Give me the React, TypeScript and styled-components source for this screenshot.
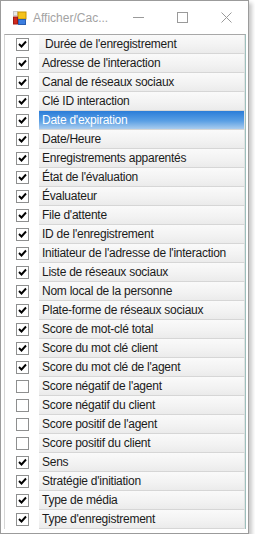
import styled, { createGlobalStyle } from 'styled-components';

const GlobalStyle = createGlobalStyle`
  html, body {
    margin: 0;
    padding: 0;
    background: #ffffff;
  }
  body {
    font-family: "Segoe UI", "Liberation Sans", Arial, sans-serif;
  }
`;

const Window = styled.div`
  width: 249px;
  height: 534px;
  background: #ffffff;
  border: 1px solid #9b9b9b;
  box-shadow: 3px 3px 4px rgba(0, 0, 0, 0.22);
  display: flex;
  flex-direction: column;
  box-sizing: border-box;
`;

const TitleBar = styled.div`
  height: 33px;
  display: flex;
  align-items: center;
  padding-left: 12px;
  box-sizing: border-box;
`;

const Title = styled.span`
  margin-left: 6px;
  font-size: 12px;
  color: #a3a3a3;
  flex: 1;
`;

const CaptionButton = styled.div`
  width: 44px;
  height: 32px;
  display: flex;
  align-items: center;
  justify-content: center;
`;

const Grid = styled.div`
  margin: 0 2px 0 3px;
  border-top: 1px solid #a8a8a8;
  border-left: 1px solid #d6d6d6;
  border-right: 1px solid #9cbfbc;
  display: flex;
  flex-direction: column;
`;

const Row = styled.div`
  display: flex;
  height: 19px;
`;

const CheckCell = styled.div`
  width: 34px;
  display: flex;
  align-items: center;
  justify-content: center;
`;

const Box = styled.div`
  width: 13px;
  height: 13px;
  box-sizing: border-box;
  border: 1px solid #8e8f8f;
  background: #ffffff;
  display: flex;
  align-items: center;
  justify-content: center;
`;

const Cell = styled.div<{ $selected?: boolean }>`
  flex: 1;
  display: flex;
  align-items: center;
  padding-left: 3px;
  font-size: 12px;
  letter-spacing: -0.25px;
  white-space: pre;
  box-sizing: border-box;
  border-bottom: 1px solid #d6d6d6;
  border-right: 1px solid #e2e2e2;
  color: ${({ $selected }) => ($selected ? '#ffffff' : '#1b1b1b')};
  background: ${({ $selected }) =>
    $selected
      ? 'linear-gradient(#2a7cd8, #5a9fe4 55%, #aaccee)'
      : 'linear-gradient(#fafafa, #f2f2f2 60%, #ebebeb)'};
`;

const columns: [string, boolean][] = [
  [" Durée de l'enregistrement", true],
  ["Adresse de l'interaction", true],
  ['Canal de réseaux sociaux', true],
  ['Clé ID interaction', true],
  ["Date d'expiration", true],
  ['Date/Heure', true],
  ['Enregistrements apparentés', true],
  ["État de l'évaluation", true],
  ['Évaluateur', true],
  ["File d'attente", true],
  ["ID de l'enregistrement", true],
  ["Initiateur de l'adresse de l'interaction", true],
  ['Liste de réseaux sociaux', true],
  ['Nom local de la personne', true],
  ['Plate-forme de réseaux sociaux', true],
  ['Score de mot-clé total', true],
  ['Score du mot clé client', true],
  ["Score du mot clé de l'agent", true],
  ["Score négatif de l'agent", false],
  ['Score négatif du client', false],
  ["Score positif de l'agent", false],
  ['Score positif du client', false],
  ['Sens', true],
  ["Stratégie d'initiation", true],
  ['Type de média', true],
  ["Type d'enregistrement", true],
];

const AppIcon = () => (
  <svg width="14" height="14" viewBox="0 0 14 14">
    <rect x="0.5" y="0.5" width="4" height="4" fill="#e8e8e8" stroke="#c8c8c8" />
    <rect x="5" y="1" width="8" height="7" fill="#f5c31c" stroke="#c89400" />
    <rect x="0.5" y="6" width="4" height="7" fill="#d2281e" stroke="#a01a12" />
    <rect x="5.5" y="8.5" width="7" height="5" fill="#3b7ee0" stroke="#2a5eb0" />
  </svg>
);

const Check = () => (
  <svg width="9" height="9" viewBox="0 0 9 9">
    <path d="M1 4 L3.5 6.5 L8 1.5" fill="none" stroke="#000" strokeWidth="1.9" />
  </svg>
);

const App = () => (
  <>
    <GlobalStyle />
    <Window>
      <TitleBar>
        <AppIcon />
        <Title>Afficher/Cac...</Title>
        <CaptionButton>
          <svg width="11" height="11" viewBox="0 0 11 11">
            <path d="M0 5.5 H11" stroke="#9a9a9a" strokeWidth="1" />
          </svg>
        </CaptionButton>
        <CaptionButton>
          <svg width="11" height="11" viewBox="0 0 11 11">
            <rect x="0.5" y="0.5" width="10" height="10" fill="none" stroke="#9a9a9a" />
          </svg>
        </CaptionButton>
        <CaptionButton>
          <svg width="11" height="11" viewBox="0 0 11 11">
            <path d="M0.5 0.5 L10.5 10.5 M10.5 0.5 L0.5 10.5" stroke="#9a9a9a" strokeWidth="1" />
          </svg>
        </CaptionButton>
      </TitleBar>
      <Grid>
        {columns.map(([label, visible], i) => (
          <Row key={label}>
            <CheckCell>
              <Box>{visible && <Check />}</Box>
            </CheckCell>
            <Cell $selected={i === 4}>{label}</Cell>
          </Row>
        ))}
      </Grid>
    </Window>
  </>
);

export default App;
